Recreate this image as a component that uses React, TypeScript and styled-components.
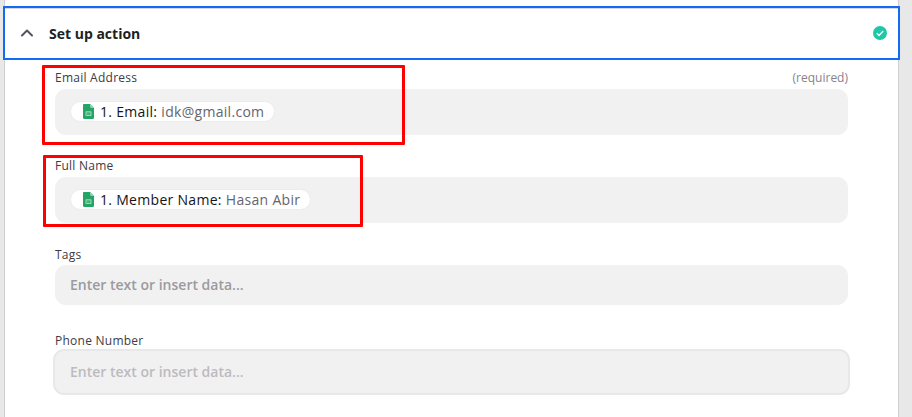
import styled, { createGlobalStyle } from "styled-components";
import { ChevronUp } from "lucide-react";

const GlobalStyle = createGlobalStyle`
  html, body {
    margin: 0;
    height: 100%;
    overflow: hidden;
    background: #e8e8e8;
    font-family: "Open Sans", "Liberation Sans", sans-serif;
  }
`;

function SheetsIcon() {
  return (
    <SheetsSvg viewBox="0 0 11 15" aria-hidden="true">
      <path d="M1.2 0H7l4 4v9.8c0 .7-.5 1.2-1.2 1.2H1.2C.5 15 0 14.5 0 13.8V1.2C0 .5.5 0 1.2 0z" fill="#23a566" />
      <path d="M7 0l4 4H8.2C7.5 4 7 3.5 7 2.8V0z" fill="#8ed1b1" />
      <rect x="2.6" y="7.4" width="5.8" height="4.4" fill="#b9e3cd" />
      <rect x="3.4" y="8.2" width="4.2" height="2.8" fill="#47b27d" />
    </SheetsSvg>
  );
}

function Pill({ name, value }: { name: string; value: string }) {
  return (
    <Chip>
      <SheetsIcon />
      <ChipName>{name}</ChipName>
      <ChipValue>{value}</ChipValue>
    </Chip>
  );
}

export default function App() {
  return (
    <>
      <GlobalStyle />
      <Panel>
        <Header>
          <ChevronUp size={20} color="#55535c" strokeWidth={2.4} />
          <HeaderTitle>Set up action</HeaderTitle>
          <CheckBadge viewBox="0 0 14 14" aria-hidden="true">
            <circle cx="7" cy="7" r="7" fill="#1fc7a6" />
            <path d="M3.8 7.3l2.2 2.1 4.2-4.4" fill="none" stroke="#fff" strokeWidth="1.4" />
          </CheckBadge>
        </Header>
        <Form>
          <Field $top={0}>
            <LabelRow $gap={4}>
              <Label>Email Address</Label>
              <Required>(required)</Required>
            </LabelRow>
            <InputBox>
              <Pill name="1. Email:" value="idk@gmail.com" />
            </InputBox>
            <RedMark $left={-13} $top={-4} $width={363} $height={80} />
          </Field>
          <Field $top={22}>
            <LabelRow $gap={4}>
              <Label>Full Name</Label>
            </LabelRow>
            <InputBox>
              <Pill name="1. Member Name:" value="Hasan Abir" />
            </InputBox>
            <RedMark $left={-12} $top={-2} $width={320} $height={72} />
          </Field>
          <Field $top={23}>
            <LabelRow $gap={3}>
              <Label>Tags</Label>
            </LabelRow>
            <InputBox $compact>
              <Placeholder>Enter text or insert data...</Placeholder>
            </InputBox>
          </Field>
          <Field $top={27}>
            <LabelRow $gap={1}>
              <Label>Phone Number</Label>
            </LabelRow>
            <InputBox $focused>
              <Placeholder $faint>Enter text or insert data...</Placeholder>
            </InputBox>
          </Field>
        </Form>
      </Panel>
    </>
  );
}

const Panel = styled.main`
  box-sizing: border-box;
  width: 895px;
  height: 417px;
  margin-left: 4px;
  padding-top: 6px;
  background: #fff;
  border-left: 1px solid #cfcfcf;
  border-right: 1px solid #cfcfcf;
`;

const Header = styled.header`
  box-sizing: border-box;
  display: flex;
  align-items: center;
  height: 54px;
  margin: 0 -2px;
  padding: 0 11px 0 12px;
  background: #fff;
  border: 2px solid #136bf5;
  box-shadow: inset 0 1px 0 #d6d6d6;
`;

const HeaderTitle = styled.h2`
  flex: 1;
  margin: 0 0 0 12px;
  font-size: 14px;
  font-weight: 700;
  color: #201f24;
`;

const CheckBadge = styled.svg`
  width: 14px;
  height: 14px;
`;

const Form = styled.div`
  display: flex;
  flex-direction: column;
  padding: 9px 50px 0;
`;

const Field = styled.section<{ $top: number }>`
  position: relative;
  margin-top: ${({ $top }) => $top}px;
`;

const LabelRow = styled.div<{ $gap: number }>`
  display: flex;
  justify-content: space-between;
  align-items: center;
  height: 16px;
  margin-bottom: ${({ $gap }) => $gap}px;
`;

const Label = styled.label`
  font-size: 12px;
  font-weight: 500;
  letter-spacing: 0.25px;
  color: #3d3b43;
`;

const Required = styled.span`
  font-size: 12px;
  color: #85838b;
`;

const InputBox = styled.div<{ $compact?: boolean; $focused?: boolean }>`
  box-sizing: border-box;
  display: flex;
  align-items: center;
  height: ${({ $compact }) => ($compact ? "40px" : "46px")};
  padding: 0 15px 2px;
  background: #f1f1f1;
  border-radius: 11px;
  ${({ $focused }) =>
    $focused &&
    `
    margin: 0 -2px;
    border: 2px solid #e8e8e8;
  `}
`;

const Chip = styled.span`
  display: inline-flex;
  align-items: center;
  box-sizing: border-box;
  height: 21px;
  padding: 0 10px 0 12px;
  background: #fff;
  border: 1px solid #ececec;
  border-radius: 11px;
  font-size: 14px;
  font-weight: 500;
  letter-spacing: 0.3px;
`;

const SheetsSvg = styled.svg`
  width: 11px;
  height: 15px;
  margin-right: 6px;
`;

const ChipName = styled.span`
  color: #141318;
  margin-right: 4px;
`;

const ChipValue = styled.span`
  color: #66646c;
`;

const Placeholder = styled.span<{ $faint?: boolean }>`
  font-size: 14px;
  font-weight: 600;
  color: ${({ $faint }) => ($faint ? "#bcbbbf" : "#9b9a9f")};
`;

const RedMark = styled.div<{ $left: number; $top: number; $width: number; $height: number }>`
  position: absolute;
  box-sizing: border-box;
  left: ${({ $left }) => $left}px;
  top: ${({ $top }) => $top}px;
  width: ${({ $width }) => $width}px;
  height: ${({ $height }) => $height}px;
  border: 3px solid #fe0000;
  border-radius: 1px;
  pointer-events: none;
`;
